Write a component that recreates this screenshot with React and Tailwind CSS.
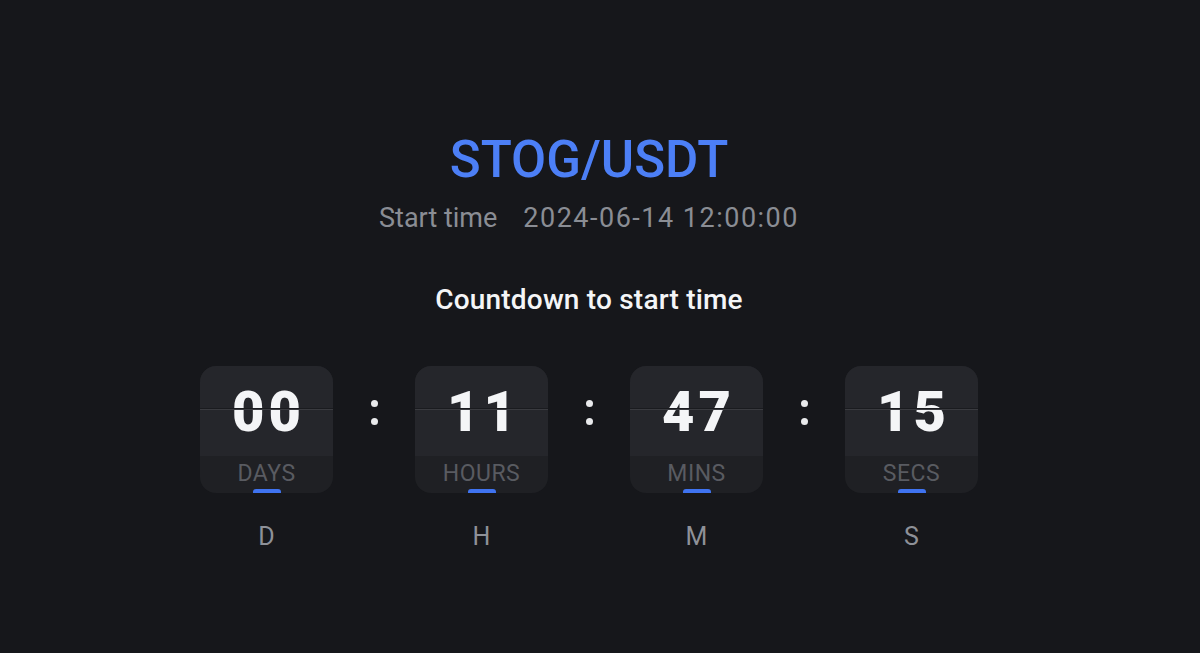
import React from "react";

const units = [
  { value: "00", label: "DAYS", short: "D" },
  { value: "11", label: "HOURS", short: "H" },
  { value: "47", label: "MINS", short: "M" },
  { value: "15", label: "SECS", short: "S" },
];

const FlipCard = ({ value, label, short }) => (
  <div className="flex flex-col items-center w-[133px]">
    <div className="relative w-[133px] h-[127px] rounded-[16px] overflow-hidden bg-[#1f2024] flex flex-col">
      <div className="relative h-[90px] bg-[#25262b] flex items-center justify-center">
        <span className="text-[56px] leading-none font-black tracking-[4px] text-[#f4f5f7] pl-[4px] pt-[1px]">
          {value}
        </span>
        {/* fold line across the card */}
        <div className="absolute left-0 right-0 top-[43px] h-[1px] bg-[#3a3b40]" />
        <div className="absolute left-0 right-0 top-[42px] h-[1px] bg-[#1a1b1f]" />
      </div>
      <div className="flex-1 flex items-center justify-center">
        <span className="text-[23px] leading-none tracking-[0.5px] text-[#595b61] pb-[2px]">{label}</span>
      </div>
      <div className="absolute bottom-0 left-1/2 -translate-x-1/2 w-[28px] h-[4px] rounded-t-[3px] bg-[#3f73f0]" />
    </div>
    <div className="mt-[31px] text-[25px] leading-none text-[#8e9198]">{short}</div>
  </div>
);

const Colon = () => (
  <div className="w-[82px] h-[92px] flex flex-col items-center justify-center gap-[11px]">
    <div className="w-[7px] h-[7px] rounded-full bg-[#e9eaec]" />
    <div className="w-[7px] h-[7px] rounded-full bg-[#e9eaec]" />
  </div>
);

export default function App() {
  return (
    <div
      className="min-h-[653px] w-full bg-[#16171b] flex flex-col items-center pr-[22px] pt-[134px]"
      style={{ fontFamily: 'Roboto, "Liberation Sans", Arial, sans-serif' }}
    >
      <h1 className="text-[51px] leading-none font-medium text-[#4c7ff6]">
        STOG/USDT
      </h1>
      <div className="mt-[20px] flex items-center gap-[26px] text-[27px] leading-none text-[#8a8d94]">
        <span>Start time</span>
        <span className="tracking-[1.5px]">2024-06-14 12:00:00</span>
      </div>
      <div className="mt-[54px] text-[28px] leading-none font-medium tracking-[0.2px] text-[#f4f5f7]">
        Countdown to start time
      </div>

      <div className="mt-[52px] flex items-start">
        {units.map((u, i) => (
          <React.Fragment key={u.label}>
            {i > 0 && <Colon />}
            <FlipCard {...u} />
          </React.Fragment>
        ))}
      </div>
    </div>
  );
}
